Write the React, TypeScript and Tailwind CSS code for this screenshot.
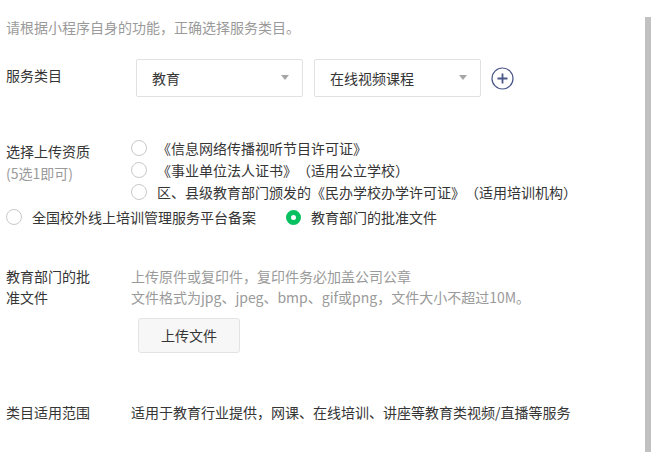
import React from "react";

function Radio({ checked = false }: { checked?: boolean }) {
  return checked ? (
    <span className="inline-block w-[15px] h-[15px] rounded-full border-[5px] border-[#07c160] bg-white shrink-0" />
  ) : (
    <span className="inline-block w-[16px] h-[16px] rounded-full border border-[#c9c9c9] bg-white shrink-0" />
  );
}

function Select({ value }: { value: string }) {
  return (
    <div className="w-[167px] h-[38px] border border-[#e1e1e1] rounded-[2px] bg-white flex items-center justify-between pl-[15px] pr-[13px]">
      <span className="text-[#353535]">{value}</span>
      <svg width="8" height="5" viewBox="0 0 8 5" className="mb-[2px]">
        <path d="M0 0 L8 0 L4 5 Z" fill="#a6a6a6" />
      </svg>
    </div>
  );
}

export default function App() {
  return (
    <div
      className="w-[670px] h-[473px] bg-white flex text-[14px] text-[#353535] [text-spacing-trim:space-all]"
      style={{ fontFamily: '"Noto Sans CJK SC", "Microsoft YaHei", sans-serif' }}
    >
      <div className="w-[645px] pl-[6px] pt-[17px]">
        <div className="leading-[20px] text-[#9a9a9a]">请根据小程序自身的功能，正确选择服务类目。</div>

        {/* 服务类目 */}
        <div className="flex items-start mt-[22px]">
          <div className="w-[130px] leading-[20px] mt-[6px]">服务类目</div>
          <div className="flex items-center gap-[11px]">
            <Select value="教育" />
            <Select value="在线视频课程" />
            <svg width="23" height="23" viewBox="0 0 23 23" className="-ml-[1px]">
              <circle cx="11.5" cy="11.5" r="10.5" fill="none" stroke="#4b5789" strokeWidth="1.2" />
              <path d="M11.5 6.5 V16.5 M6.5 11.5 H16.5" stroke="#4b5789" strokeWidth="1.8" />
            </svg>
          </div>
        </div>

        {/* 选择上传资质 */}
        <div className="flex items-start mt-[40px]">
          <div className="w-[125px] leading-[22px] mt-[3px]">
            <div>选择上传资质</div>
            <div className="text-[#9a9a9a]">(5选1即可)</div>
          </div>
          <div className="flex flex-col leading-[22px]">
            <div className="flex items-center gap-[10px] h-[22px]">
              <Radio />
              <span>《信息网络传播视听节目许可证》</span>
            </div>
            <div className="flex items-center gap-[10px] h-[22px]">
              <Radio />
              <span>《事业单位法人证书》（适用公立学校）</span>
            </div>
            <div className="flex items-center gap-[10px] h-[22px]">
              <Radio />
              <span>区、县级教育部门颁发的《民办学校办学许可证》（适用培训机构）</span>
            </div>
          </div>
        </div>
        <div className="flex items-center mt-[3px] h-[22px] leading-[22px]">
          <div className="flex items-center gap-[10px]">
            <Radio />
            <span>全国校外线上培训管理服务平台备案</span>
          </div>
          <div className="flex items-center gap-[10px] ml-[30px]">
            <Radio checked />
            <span>教育部门的批准文件</span>
          </div>
        </div>

        {/* 教育部门的批准文件 */}
        <div className="flex items-start mt-[38px] leading-[21px]">
          <div className="w-[125px] pr-[30px]">教育部门的批准文件</div>
          <div className="flex flex-col">
            <div className="text-[#9a9a9a]">上传原件或复印件，复印件务必加盖公司公章</div>
            <div className="text-[#9a9a9a]">文件格式为jpg、jpeg、bmp、gif或png，文件大小不超过10M。</div>
            <div className="mt-[10px] ml-[7px]">
              <button className="w-[102px] h-[35px] bg-[#f7f7f7] border border-[#e3e3e3] rounded-[3px] text-[#353535] text-[14px]">
                上传文件
              </button>
            </div>
          </div>
        </div>

        {/* 类目适用范围 */}
        <div className="flex items-start mt-[49px] leading-[20px]">
          <div className="w-[125px]">类目适用范围</div>
          <div>适用于教育行业提供，网课、在线培训、讲座等教育类视频/直播等服务</div>
        </div>
      </div>
      <div className="w-[6px] mt-[17px] h-[435px] bg-[#c1c1c1]" />
    </div>
  );
}
